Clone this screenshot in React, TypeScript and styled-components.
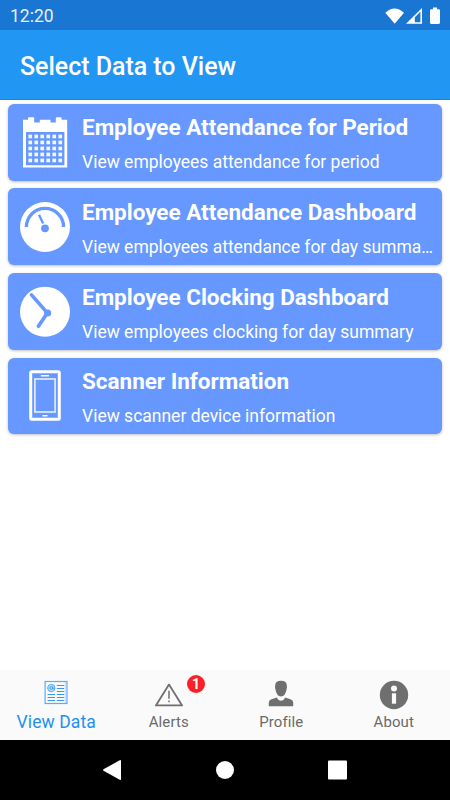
import React from 'react';
import styled, { createGlobalStyle } from 'styled-components';

const GlobalStyle = createGlobalStyle`
  * { box-sizing: border-box; }
  body { margin: 0; background: #fff; font-family: Roboto, "Liberation Sans", sans-serif; }
  svg { display: block; flex: none; }
`;

const Screen = styled.div`
  display: flex;
  flex-direction: column;
  width: 450px;
  height: 800px;
  overflow: hidden;
  background: #fff;
`;

const StatusBar = styled.div`
  display: flex;
  align-items: center;
  justify-content: space-between;
  flex: none;
  height: 30px;
  padding: 1px 9px 0 10px;
  background: #1976d2;
  color: #e6effa;
  font-size: 17.5px;
`;

const AppBar = styled.header`
  display: flex;
  align-items: center;
  flex: none;
  height: 70px;
  padding: 4px 20px 0;
  background: #2196f3;
  border-bottom: 1px solid #1c84dd;
  color: #fff;
`;

const PageTitle = styled.h1`
  margin: 0;
  font-size: 25px;
  line-height: 31px;
  font-weight: 500;
  letter-spacing: -0.03px;
`;

const CardList = styled.main`
  flex: 1;
  display: flex;
  flex-direction: column;
  gap: 7.9px;
  padding: 3.9px 8px 3.9px 7.5px;
`;

const Card = styled.article`
  display: grid;
  grid-template-columns: 74.5px minmax(0, 1fr);
  flex: none;
  height: 76.7px;
  padding-right: 6.5px;
  border-radius: 6px;
  background: #6698ff;
  color: #fff;
  box-shadow: 0 1px 3px rgba(0, 0, 0, 0.26);
`;

const CardIcon = styled.div`
  display: flex;
  align-items: center;
  justify-content: center;
`;

const CardText = styled.div`
  padding-top: 9.6px;
`;

const CardTitle = styled.h2`
  margin: 0;
  font-size: 22.5px;
  line-height: 28px;
  font-weight: 700;
  letter-spacing: -0.02px;
  white-space: nowrap;
`;

const CardDetail = styled.p`
  margin: 9px 0 0;
  font-size: 17.5px;
  line-height: 24px;
  letter-spacing: -0.01px;
  overflow: hidden;
  text-overflow: ellipsis;
  white-space: nowrap;
`;

const TabBar = styled.nav`
  display: grid;
  grid-template-columns: repeat(4, 1fr);
  flex: none;
  height: 70px;
  background: #fafafa;
`;

const Tab = styled.div<{ $active?: boolean }>`
  position: relative;
  display: flex;
  flex-direction: column;
  align-items: center;
  padding-top: 8px;
  color: ${(p) => (p.$active ? '#1e90f5' : '#6f6f6f')};
`;

const TabIcon = styled.div`
  display: flex;
  justify-content: center;
  height: 32px;
`;

const TabLabel = styled.span<{ $active?: boolean }>`
  font-size: ${(p) => (p.$active ? '17.5px' : '15px')};
  line-height: ${(p) => (p.$active ? '24px' : '25px')};
  letter-spacing: 0.1px;
  color: ${(p) => (p.$active ? '#1e90f5' : '#6a6a6a')};
  white-space: nowrap;
`;

const Badge = styled.span`
  position: absolute;
  top: 4.5px;
  left: 74.5px;
  width: 18px;
  height: 18px;
  border-radius: 50%;
  background: #fb2027;
  color: #fff;
  font-size: 14px;
  font-weight: 700;
  line-height: 19px;
  text-align: center;
`;

const SystemNav = styled.footer`
  display: grid;
  grid-template-columns: repeat(3, 112.5px);
  justify-content: center;
  justify-items: center;
  align-items: center;
  flex: none;
  height: 60px;
  background: #000;
`;

const BLUE = '#6698ff';

const StatusIcons = () => (
  <svg width="56" height="18" viewBox="385 6 56 18" fill="#fff">
    <path d="M385.3 11.8Q394.5 3 404 11.8L394.7 22.8Z" />
    <path fillRule="evenodd" d="M406 22.8L422 7V22.8ZM414.8 16.2V21.3H420.4V10.7Z" />
    <path d="M431.3 8.2H433V6.5H437V8.2H438.7Q440 8.2 440 9.5V21.6Q440 22.9 438.7 22.9H431.3Q430 22.9 430 21.6V9.5Q430 8.2 431.3 8.2Z" />
  </svg>
);

const columns = [0, 1, 2, 3, 4, 5];

const CalendarIcon = () => (
  <svg width="50" height="52" viewBox="20 116 50 52">
    <path fill="#fff" d="M23 119.8H28V118.3Q28 117.3 29 117.3H33.2Q34.2 117.3 34.2 118.3V122.5H39.8V119.8H50.5V122.5H55.8V118.3Q55.8 117.3 56.8 117.3H60.6Q61.6 117.3 61.6 118.3V119.8H67.2V167.5H23Z" />
    <path fill={BLUE} d="M26 132H64.4V165.3H26Z" />
    {[0, 1, 2, 3, 4].map((r) =>
      columns.map((c) => (
        <rect key={`${r}-${c}`} x={28.4 + c * 6} y={134.6 + r * 6} width="3.7" height="3.7" fill="#fff" fillOpacity=".92" />
      )),
    )}
  </svg>
);

const GaugeIcon = () => (
  <svg width="50" height="50" viewBox="0 0 50 50">
    <circle cx="25" cy="25" r="25" fill="#fff" />
    <path d="M6.4 25A18.6 18.6 0 0 1 43.6 25" fill="none" stroke={BLUE} strokeWidth="3.4" />
    <path d="M19 12.7L23.1 21.4" stroke={BLUE} strokeWidth="2.4" />
    <circle cx="25" cy="26.3" r="3.9" fill={BLUE} />
  </svg>
);

const ClockIcon = () => (
  <svg width="50" height="51" viewBox="0 -0.7 50 51">
    <circle cx="25" cy="25" r="25" fill="#fff" />
    <path d="M11.5 8.2L27.3 26.2L18.4 39.6" fill="none" stroke={BLUE} strokeWidth="3.6" strokeLinecap="round" strokeLinejoin="round" />
    <circle cx="27.6" cy="26.3" r="3.6" fill={BLUE} />
  </svg>
);

const PhoneIcon = () => (
  <svg width="32" height="51" viewBox="0 0 32 51" fill="none" stroke="#fff">
    <rect x="1.7" y="1.7" width="28.6" height="47.6" rx="1" strokeWidth="3" />
    <rect x="5.9" y="9" width="20.2" height="33" strokeWidth="1.7" strokeOpacity=".8" />
    <path d="M12.4 5.7H19.4M14 45.8H18" strokeWidth="1.5" strokeLinecap="round" />
  </svg>
);

const DataIcon = () => (
  <svg width="24" height="27" viewBox="0 0 24 27" fill="none" stroke="#369af3">
    <rect x="1.1" y="3.5" width="21.9" height="22" strokeWidth="1.2" strokeOpacity=".8" />
    <path d="M21.3 4V25" strokeWidth=".8" strokeOpacity=".4" />
    <circle cx="7.3" cy="10" r="3.7" fill="#369af3" fillOpacity=".3" strokeWidth="1" strokeOpacity=".75" />
    <circle cx="7.3" cy="10" r="1.4" strokeWidth=".9" />
    <path d="M8.8 8.3V10.5Q10 11.4 10.8 10" strokeWidth=".8" />
    <path d="M12.8 7.5H20.2M12.8 10.5H20.2M12.8 13.5H20.2M12.8 16.5H20.2M12.8 19.5H20.2M12.8 22.5H20.2M3.6 16.5H11M3.6 19.5H11M3.6 22.5H11" strokeWidth="1.1" />
  </svg>
);

const AlertIcon = () => (
  <svg width="30" height="30" viewBox="0 0 30 30" fill="none" stroke="currentColor">
    <path d="M15 6.6L28.1 27.4H1.9Z" strokeWidth="1.8" strokeLinejoin="round" />
    <path d="M15 12.8V20.7M15 22.4V24.2" strokeWidth="1.5" />
  </svg>
);

const ProfileIcon = () => (
  <svg width="26" height="30" viewBox="0 0 26 30" fill="currentColor">
    <path d="M7.2 7.5Q7 2.7 13 2.7Q19 2.7 18.8 7.5Q19.2 8.5 18.7 11Q17.3 18.5 13 18.6Q8.7 18.5 7.3 11Q6.8 8.5 7.2 7.5Z" />
    <path d="M.8 28.2V24.5Q.8 22.2 3.5 21.3L8.9 19.4Q10.4 22.7 13 22.7Q15.6 22.7 17.1 19.4L22.5 21.3Q25.2 22.2 25.2 24.5V28.2Z" />
  </svg>
);

const InfoIcon = () => (
  <svg width="30" height="32" viewBox="0 0 30 32">
    <circle cx="15" cy="17" r="14.2" fill="currentColor" />
    <circle cx="15" cy="10.6" r="3" fill="#fafafa" />
    <path fill="#fafafa" d="M12.9 15.3H17.1V25.7H12.9Z" />
  </svg>
);

const cards = [
  { icon: <CalendarIcon />, title: 'Employee Attendance for Period', detail: 'View employees attendance for period' },
  { icon: <GaugeIcon />, title: 'Employee Attendance Dashboard', detail: 'View employees attendance for day summary' },
  { icon: <ClockIcon />, title: 'Employee Clocking Dashboard', detail: 'View employees clocking for day summary' },
  { icon: <PhoneIcon />, title: 'Scanner Information', detail: 'View scanner device information' },
];

const tabs = [
  { icon: <DataIcon />, label: 'View Data', active: true },
  { icon: <AlertIcon />, label: 'Alerts', badge: 1 },
  { icon: <ProfileIcon />, label: 'Profile' },
  { icon: <InfoIcon />, label: 'About' },
];

export default function App() {
  return (
    <>
      <GlobalStyle />
      <Screen>
        <StatusBar>
          <span>12:20</span>
          <StatusIcons />
        </StatusBar>
        <AppBar>
          <PageTitle>Select Data to View</PageTitle>
        </AppBar>
        <CardList>
          {cards.map((card) => (
            <Card key={card.title}>
              <CardIcon>{card.icon}</CardIcon>
              <CardText>
                <CardTitle>{card.title}</CardTitle>
                <CardDetail>{card.detail}</CardDetail>
              </CardText>
            </Card>
          ))}
        </CardList>
        <TabBar>
          {tabs.map((tab) => (
            <Tab key={tab.label} $active={tab.active}>
              <TabIcon>{tab.icon}</TabIcon>
              <TabLabel $active={tab.active}>{tab.label}</TabLabel>
              {tab.badge && <Badge>{tab.badge}</Badge>}
            </Tab>
          ))}
        </TabBar>
        <SystemNav>
          <svg width="20" height="20" viewBox="0 0 20 20" fill="#fff">
            <path d="M17.2 0Q18 0 18 .8V19.2Q18 20 17.2 20L.5 10.7Q-.3 10 .5 9.3Z" />
          </svg>
          <svg width="18" height="18" viewBox="0 0 18 18" fill="#fff">
            <circle cx="9" cy="9" r="9" />
          </svg>
          <svg width="19" height="20" viewBox="0 0 19 20" fill="#fff">
            <rect y=".5" width="19" height="19" rx="1" />
          </svg>
        </SystemNav>
      </Screen>
    </>
  );
}
